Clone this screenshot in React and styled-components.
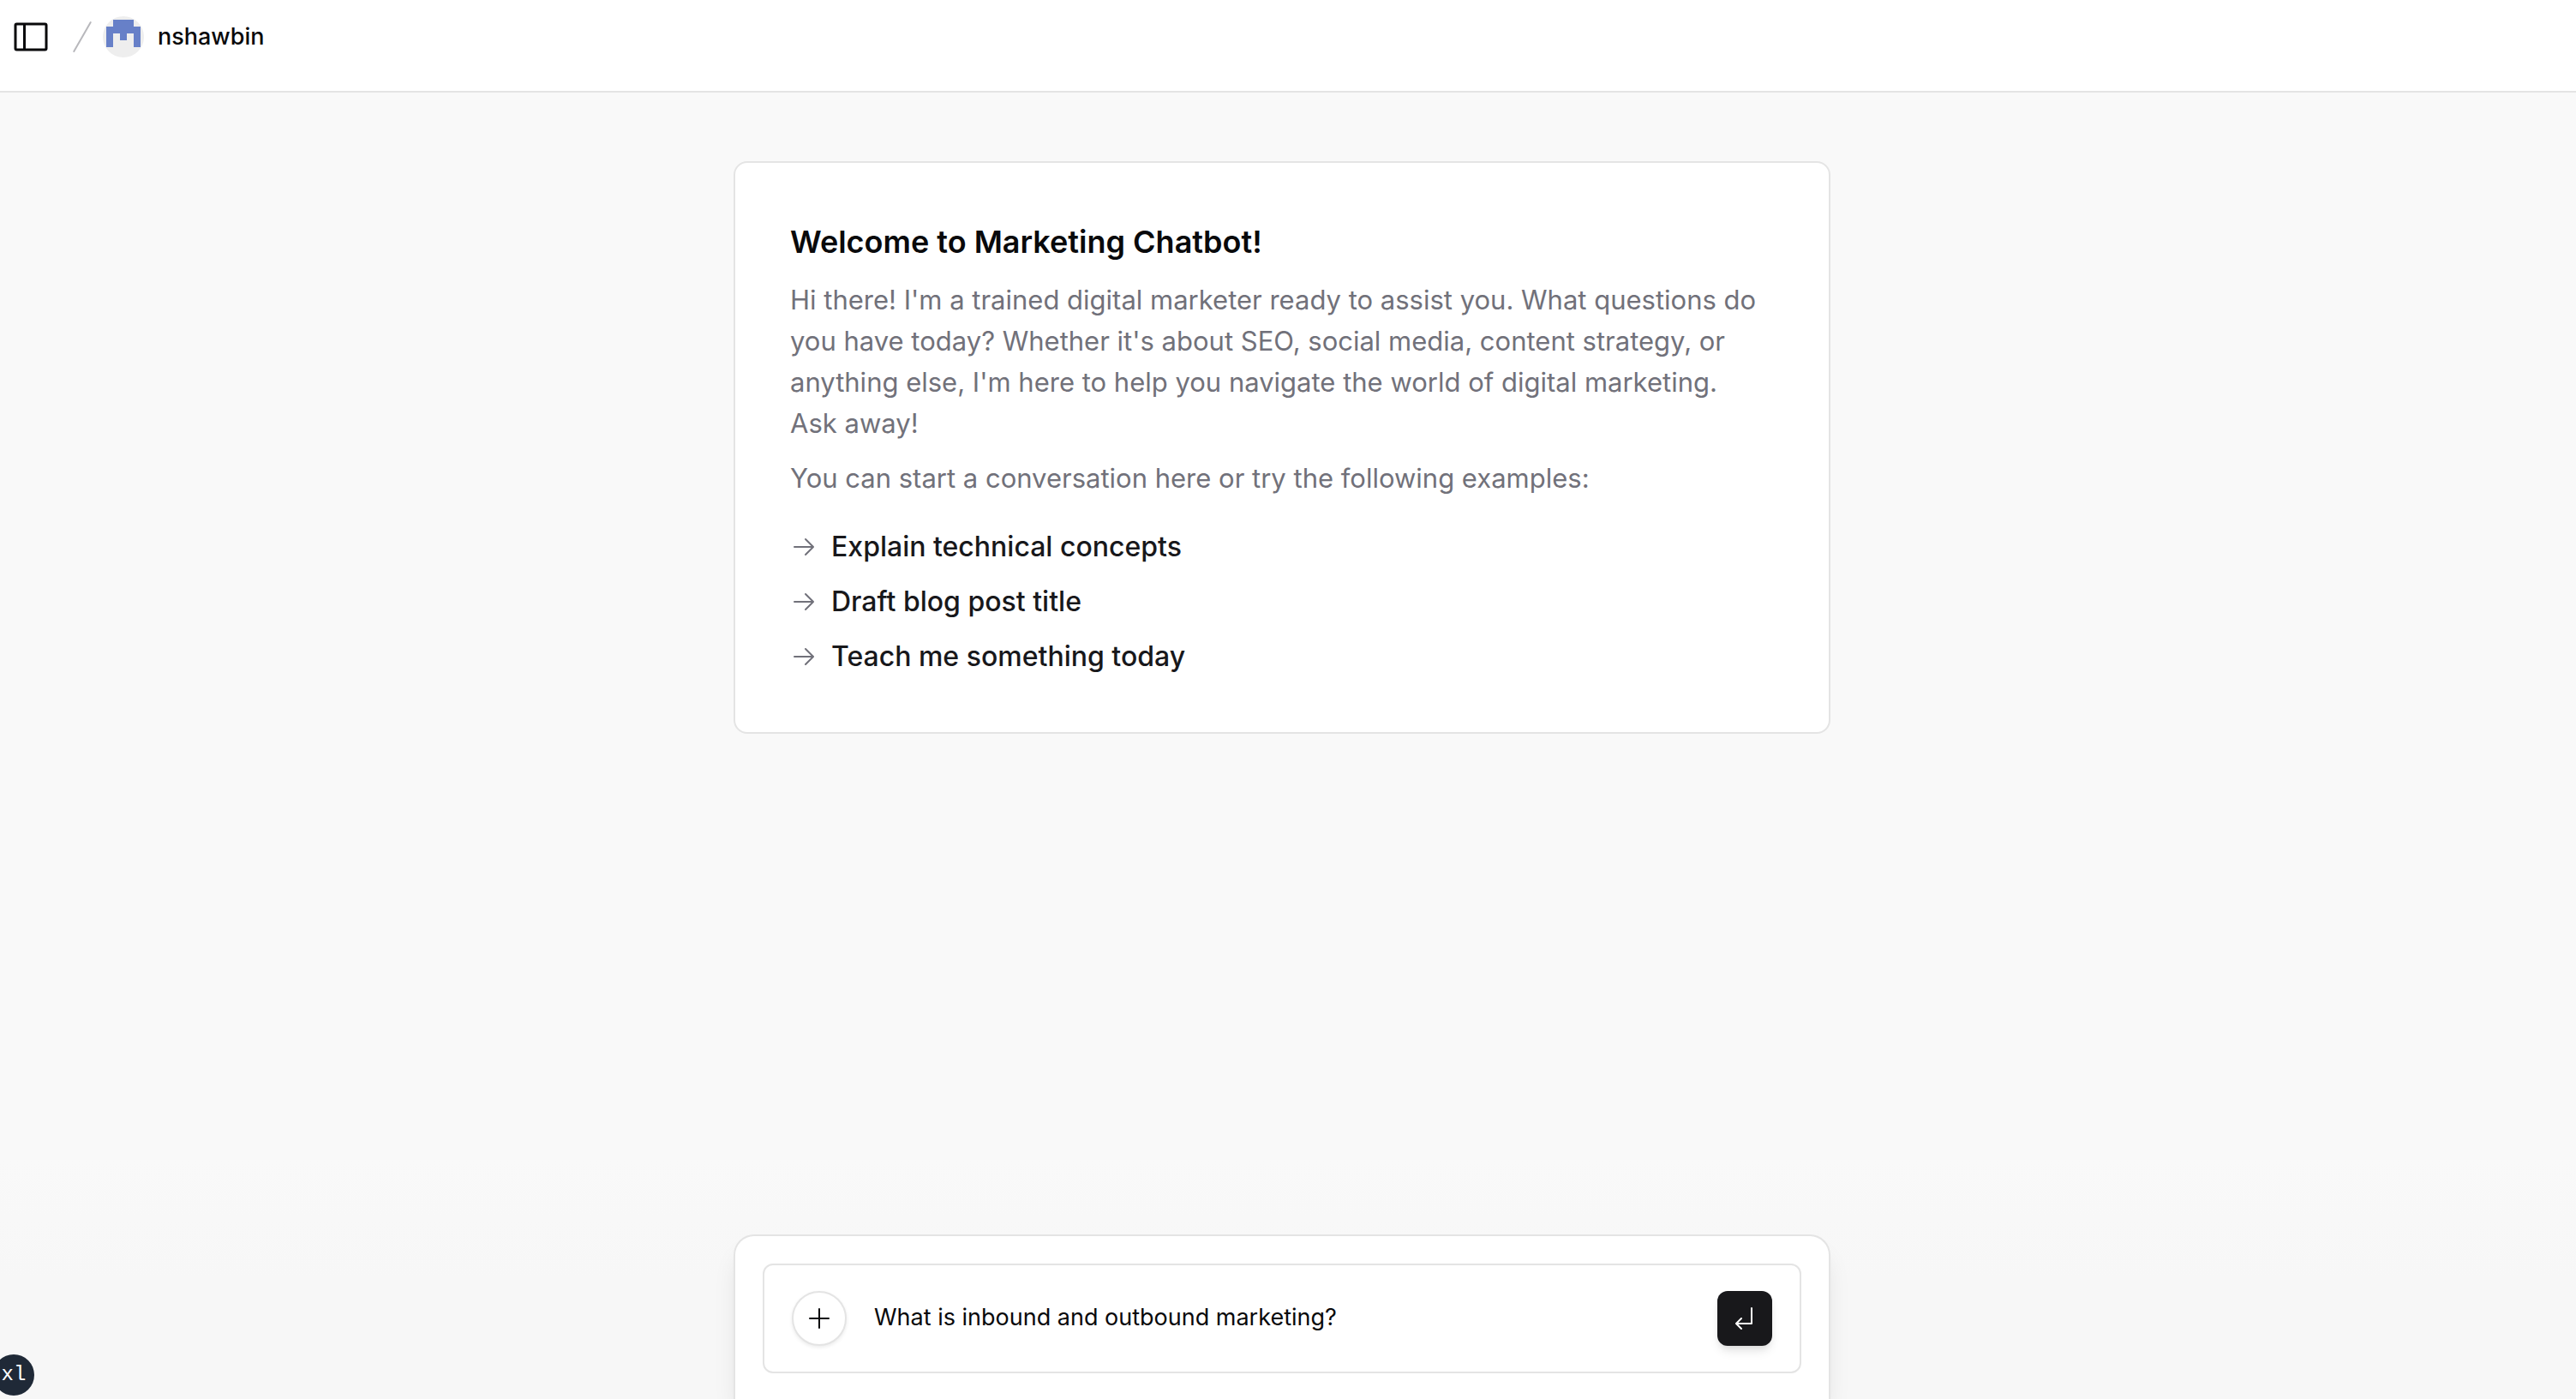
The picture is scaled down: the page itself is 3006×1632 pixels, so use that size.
import React, { useState } from "react";
import styled, { createGlobalStyle } from "styled-components";

const GlobalStyle = createGlobalStyle`
  *, *::before, *::after { box-sizing: border-box; }
  html, body { margin: 0; }
  body {
    background: #f9f9f9;
    color: #09090b;
    font-family: Inter, "Liberation Sans", sans-serif;
    -webkit-font-smoothing: antialiased;
  }
  button, input { font: inherit; color: inherit; }
  h1, p, ul { margin: 0; padding: 0; }
`;

const Page = styled.div`
  min-height: 100vh;
  display: flex;
  flex-direction: column;
`;

const Header = styled.header`
  display: flex;
  align-items: center;
  padding: 7px 0 27px;
  background: #fff;
  border-bottom: 2px solid #e4e4e4;
`;

const IconButton = styled.button`
  display: grid;
  place-items: center;
  width: 72px;
  height: 72px;
  padding: 0;
  border: 0;
  background: transparent;
  cursor: pointer;
`;

const Separator = styled.svg`
  width: 48px;
  height: 48px;
  fill: none;
  stroke: #b8b8bc;
  stroke-linecap: round;
`;

const UserButton = styled.button`
  display: flex;
  align-items: center;
  gap: 16px;
  padding: 0;
  border: 0;
  background: transparent;
  font-size: 27px;
  line-height: 40px;
  font-weight: 500;
  cursor: pointer;
`;

const Avatar = styled.svg`
  width: 48px;
  height: 48px;
  border-radius: 50%;
  background: #eeeeee;
  fill: #6780c8;
`;

const Main = styled.main`
  flex: 1;
  padding: 80px 14px 80px 0;
`;

const Card = styled.section`
  width: 100%;
  max-width: 1280px;
  margin: 0 auto;
  padding: 64px;
  background: #fff;
  border: 2px solid #e4e4e4;
  border-radius: 16px;
`;

const Title = styled.h1`
  margin-bottom: 16px;
  font-size: 36px;
  line-height: 56px;
  font-weight: 600;
`;

const Text = styled.p`
  margin-bottom: 16px;
  color: #71717a;
  font-size: 31px;
  line-height: 48px;
`;

const Examples = styled.ul`
  display: flex;
  flex-direction: column;
  align-items: flex-start;
  gap: 16px;
  margin-top: 32px;
  list-style: none;
`;

const ExampleButton = styled.button`
  display: flex;
  align-items: center;
  gap: 16px;
  padding: 0;
  border: 0;
  background: transparent;
  color: #18181b;
  font-size: 32px;
  line-height: 48px;
  font-weight: 500;
  cursor: pointer;
`;

const Icon = styled.svg`
  flex: none;
  width: ${(p) => p.$size}px;
  height: ${(p) => p.$size}px;
  fill: ${(p) => p.$color || "currentColor"};
`;

const Footer = styled.footer`
  padding: 88px 14px 0 0;
  background: linear-gradient(to bottom, #f9f9f9 0%, #f7f7f7 50%);
`;

const Panel = styled.div`
  width: 100%;
  max-width: 1280px;
  margin: 0 auto;
  padding: 32px 32px 30px;
  background: #fff;
  border: 2px solid #e4e4e4;
  border-bottom: 0;
  border-radius: 24px 24px 0 0;
  box-shadow: 0 20px 30px -6px rgba(0, 0, 0, 0.1), 0 8px 12px -8px rgba(0, 0, 0, 0.1);
`;

const Form = styled.form`
  display: flex;
  align-items: center;
  gap: 32px;
  padding: 30px 32px;
  border: 2px solid #e4e4e4;
  border-radius: 12px;
`;

const RoundButton = styled.button`
  display: grid;
  place-items: center;
  width: 64px;
  height: 64px;
  padding: 0;
  border: 2px solid #e4e4e4;
  border-radius: 50%;
  background: #fff;
  box-shadow: 0 2px 4px rgba(0, 0, 0, 0.08);
  cursor: pointer;
`;

const SendButton = styled.button`
  display: grid;
  place-items: center;
  width: 64px;
  height: 64px;
  padding: 0;
  border: 0;
  border-radius: 12px;
  background: #18181b;
  color: #fff;
  box-shadow: 0 8px 12px -2px rgba(0, 0, 0, 0.1), 0 4px 8px -4px rgba(0, 0, 0, 0.1);
  cursor: pointer;
`;

const MessageInput = styled.input`
  flex: 1;
  min-width: 0;
  padding: 0 0 2px;
  border: 0;
  outline: 0;
  background: transparent;
  font-size: 27px;
  line-height: 40px;
`;

const Breakpoint = styled.div`
  position: fixed;
  left: -8px;
  bottom: 4px;
  display: grid;
  place-items: center;
  width: 48px;
  height: 48px;
  border-radius: 50%;
  background: #1f2937;
  color: #fff;
  font-family: "Liberation Mono", monospace;
  font-size: 24px;
  line-height: 32px;
`;

const PATHS = {
  sidebar:
    "M216 40H40a16 16 0 0 0-16 16v144a16 16 0 0 0 16 16h176a16 16 0 0 0 16-16V56a16 16 0 0 0-16-16ZM40 56h40v144H40Zm176 144H96V56h120v144Z",
  arrow:
    "m221.66 133.66-72 72a8 8 0 0 1-11.32-11.32L196.69 136H40a8 8 0 0 1 0-16h156.69l-58.35-58.34a8 8 0 0 1 11.32-11.32l72 72a8 8 0 0 1 0 11.32Z",
  plus:
    "M224 128a8 8 0 0 1-8 8h-80v80a8 8 0 0 1-16 0v-80H40a8 8 0 0 1 0-16h80V40a8 8 0 0 1 16 0v80h80a8 8 0 0 1 8 8Z",
  enter:
    "M200 32v144a8 8 0 0 1-8 8H67.31l34.35 34.34a8 8 0 0 1-11.32 11.32l-48-48a8 8 0 0 1 0-11.32l48-48a8 8 0 0 1 11.32 11.32L67.31 168H184V32a8 8 0 0 1 16 0Z",
};

function Glyph({ name, size = 32, color }) {
  return (
    <Icon viewBox="0 0 256 256" $size={size} $color={color} aria-hidden="true">
      <path d={PATHS[name]} />
    </Icon>
  );
}

const EXAMPLES = [
  { heading: "Explain technical concepts", message: "What is inbound and outbound marketing?" },
  { heading: "Draft blog post title", message: "Draft a blog post title about content strategy" },
  { heading: "Teach me something today", message: "Teach me something about digital marketing" },
];

export default function App() {
  const [message, setMessage] = useState(EXAMPLES[0].message);

  return (
    <>
      <GlobalStyle />
      <Page>
        <Header>
          <IconButton type="button" aria-label="Toggle sidebar">
            <Glyph name="sidebar" size={48} />
          </IconButton>
          <Separator viewBox="0 0 24 24" aria-hidden="true">
            <path d="M16.88 3.549L7.12 20.451" />
          </Separator>
          <UserButton type="button">
            <Avatar viewBox="0 0 48 48" shapeRendering="crispEdges" aria-hidden="true">
              <path d="M12 4h24v8h8v24h-8V20h-8v8h-8v-8h-8v16H4V12h8z" />
            </Avatar>
            <span>nshawbin</span>
          </UserButton>
        </Header>

        <Main>
          <Card>
            <Title>Welcome to Marketing Chatbot!</Title>
            <Text>
              Hi there! I'm a trained digital marketer ready to assist you. What questions do you
              have today? Whether it's about SEO, social media, content strategy, or anything else,
              I'm here to help you navigate the world of digital marketing. Ask&nbsp;away!
            </Text>
            <Text>You can start a conversation here or try the following examples:</Text>
            <Examples>
              {EXAMPLES.map(({ heading, message: text }) => (
                <li key={heading}>
                  <ExampleButton type="button" onClick={() => setMessage(text)}>
                    <Glyph name="arrow" color="#71717a" />
                    {heading}
                  </ExampleButton>
                </li>
              ))}
            </Examples>
          </Card>
        </Main>

        <Footer>
          <Panel>
            <Form onSubmit={(event) => event.preventDefault()}>
              <RoundButton type="button" aria-label="New chat">
                <Glyph name="plus" />
              </RoundButton>
              <MessageInput
                type="text"
                aria-label="Message"
                placeholder="Send a message."
                value={message}
                onChange={(event) => setMessage(event.target.value)}
              />
              <SendButton type="submit" aria-label="Send message">
                <Glyph name="enter" />
              </SendButton>
            </Form>
          </Panel>
        </Footer>
      </Page>
      <Breakpoint>xl</Breakpoint>
    </>
  );
}
